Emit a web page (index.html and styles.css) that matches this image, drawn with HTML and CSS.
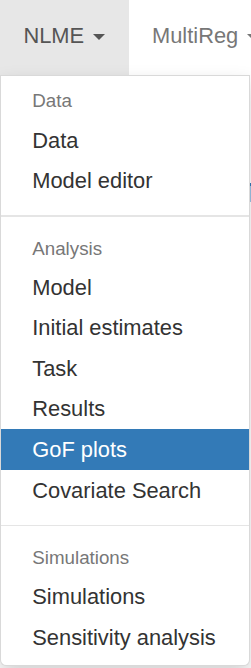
FILE: index.html
```html
<!DOCTYPE html>
<html lang="en">
<head>
    <meta charset="UTF-8">
    <meta name="viewport" content="width=device-width, initial-scale=1.0">
    <title>NLME</title>
    <link rel="stylesheet" href="styles.css">
</head>
<body>
    <div class="page">
        <div class="navbar">
            <ul class="nav">
                <li class="nav-item open">
                    <a class="nav-link" href="#">NLME <span class="caret"></span></a>
                    <ul class="menu">
                        <li class="menu-header">Data</li>
                        <li><a href="#">Data</a></li>
                        <li><a href="#">Model editor</a></li>
                        <li class="divider"></li>
                        <li class="menu-header">Analysis</li>
                        <li><a href="#">Model</a></li>
                        <li><a href="#">Initial estimates</a></li>
                        <li><a href="#">Task</a></li>
                        <li><a href="#">Results</a></li>
                        <li class="active"><a href="#">GoF plots</a></li>
                        <li><a href="#">Covariate Search</a></li>
                        <li class="divider"></li>
                        <li class="menu-header">Simulations</li>
                        <li><a href="#">Simulations</a></li>
                        <li><a href="#">Sensitivity analysis</a></li>
                    </ul>
                </li>
                <li class="nav-item">
                    <a class="nav-link" href="#">MultiReg <span class="caret"></span></a>
                </li>
            </ul>
        </div>
        <div class="behind"></div>
    </div>
</body>
</html>
```

FILE: styles.css
```css
body {
    font-family: "Liberation Sans", Arial, sans-serif;
    font-size: 21.875px;
    line-height: 1.42857;
    color: #333;
    background-color: #fff;
    margin: 0;
    padding: 0;
}
a {
    text-decoration: none;
}
ul {
    list-style: none;
    margin: 0;
    padding: 0;
}
.page {
    position: relative;
    width: 251px;
    height: 668px;
    overflow: hidden;
}
.navbar {
    height: 75px;
}
.nav {
    display: flex;
    white-space: nowrap;
}
.nav-item {
    position: relative;
}
.nav-link {
    display: block;
    height: 75px;
    box-sizing: border-box;
    padding: 20px 23.4px 0;
    line-height: 31.25px;
    color: #777;
}
.open > .nav-link {
    background-color: #e7e7e7;
    color: #555;
}
.caret {
    display: inline-block;
    width: 0;
    height: 0;
    margin-left: 3px;
    vertical-align: middle;
    border-top: 6.25px solid;
    border-right: 6.25px solid transparent;
    border-left: 6.25px solid transparent;
}
.menu {
    position: absolute;
    top: 75px;
    left: 0;
    z-index: 10;
    width: 250px;
    box-sizing: border-box;
    padding: 7.8px 0;
    background-color: #fff;
    border: 1px solid rgba(0, 0, 0, 0.15);
    border-radius: 0 0 6.25px 6.25px;
    box-shadow: 0 9.4px 18.75px rgba(0, 0, 0, 0.175);
}
.menu li a {
    display: block;
    padding: 4.69px 31.25px;
    color: #333;
    white-space: nowrap;
}
.menu .active a {
    background-color: #337ab7;
    color: #fff;
}
.menu-header {
    padding: 4.69px 31.25px;
    font-size: 18.75px;
    color: #777;
}
.divider {
    height: 1.56px;
    margin: 14.06px 0;
    background-color: #e5e5e5;
}
.behind {
    position: absolute;
    top: 183px;
    left: 249px;
    width: 4px;
    height: 16px;
    border-top: 3px solid #337ab7;
    background-color: #9cc3e5;
}
```
